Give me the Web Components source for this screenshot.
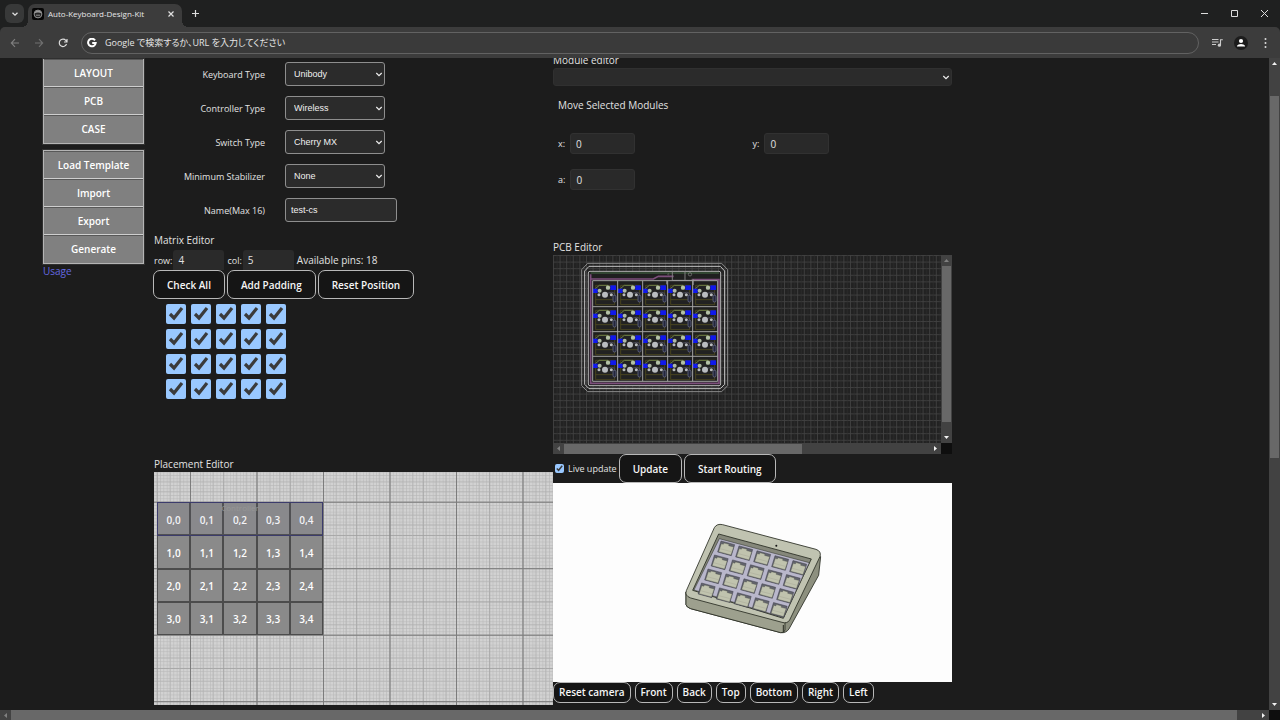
<!DOCTYPE html>
<html lang="ja">
<head>
<meta charset="utf-8">
<title>Auto-Keyboard-Design-Kit</title>
<style>
  html, body { margin: 0; height: 100%; background: #1c1c1c; overflow: hidden; }
  body { font: 10px/15px "Open Sans", "Noto Sans CJK JP", sans-serif; color: #e2e2e2; color-scheme: dark; }
</style>
</head>
<body>
<kit-window></kit-window>
<script>
const define = (name, html, setup) => {
  const template = document.createElement('template');
  template.innerHTML = `<style>
    *, :host { box-sizing: border-box; }
    :host { display: block; }
    button, input, select { font: inherit; color: inherit; margin: 0; }
    svg { display: block; }
  </style>` + html;
  customElements.define(name, class extends HTMLElement {
    constructor() {
      super();
      const root = this.attachShadow({ mode: 'open' });
      root.append(template.content.cloneNode(true));
      if (setup) setup.call(this, root);
    }
  });
};

/* ---------- Browser chrome ---------- */

define('tab-strip', `
<style>
  :host { display: flex; height: 27px; background: #1f2020; padding: 4px 1px 0 5px; }
  button { border: 0; background: none; padding: 0; display: grid; place-items: center; }
  .search { width: 19px; height: 19px; border-radius: 6px; background: #383939; margin-right: 4px; }
  .tab { position: relative; display: flex; align-items: center; width: 154px; height: 23px; background: #3c3c3c; border-radius: 7px 7px 0 0; padding: 0 7px 4px 4px; color: #e6e6e6; font-size: 8px; }
  .tab::before, .tab::after { content: ""; position: absolute; bottom: 0; width: 6px; height: 6px; }
  .tab::before { left: -6px; background: radial-gradient(circle at 0 0, transparent 6px, #3c3c3c 6px); }
  .tab::after { right: -6px; background: radial-gradient(circle at 100% 0, transparent 6px, #3c3c3c 6px); }
  .tab span { flex: 1; margin-left: 4px; white-space: nowrap; }
  .new { width: 26px; height: 19px; }
  .controls { margin-left: auto; display: flex; height: 19px; }
  .controls button { width: 30px; }
</style>
<button class="search" aria-label="Search tabs"><svg width="8" height="8" viewBox="0 0 8 8" fill="none" stroke="#e0e0e0" stroke-width="1.3"><path d="M1.5 2.8 4 5.2 6.5 2.8"/></svg></button>
<div class="tab">
  <svg width="12" height="12" viewBox="0 0 12 12"><rect width="12" height="12" rx="2" fill="#050505"/><circle cx="6" cy="6" r="3.9" fill="#242424" stroke="#b0b0b0" stroke-width=".8"/><path d="M2.4 5.4Q6 3.6 9.6 5.4L9 3.8Q6 1 3 3.8z" fill="#999"/><path d="M4 7.2h4" stroke="#aaa" stroke-width=".8" fill="none"/></svg>
  <span>Auto-Keyboard-Design-Kit</span>
  <button aria-label="Close tab"><svg width="8" height="8" viewBox="0 0 8 8" stroke="#e0e0e0" stroke-width="1.2"><path d="m1.5 1.5 5 5m0-5-5 5"/></svg></button>
</div>
<button class="new" aria-label="New tab"><svg width="9" height="9" viewBox="0 0 9 9" stroke="#ddd" stroke-width="1.2"><path d="M4.5 1v7M1 4.5h7"/></svg></button>
<div class="controls">
  <button aria-label="Minimize"><svg width="9" height="9" viewBox="0 0 9 9" stroke="#ddd"><path d="M1 4.5h7"/></svg></button>
  <button aria-label="Maximize"><svg width="9" height="9" viewBox="0 0 9 9" stroke="#ddd" fill="none"><path d="M1.5 1.5h6v6h-6z"/></svg></button>
  <button aria-label="Close"><svg width="9" height="9" viewBox="0 0 9 9" stroke="#ddd"><path d="m1 1 7 7m0-7-7 7"/></svg></button>
</div>`);

define('address-bar', `
<style>
  :host { display: flex; align-items: center; height: 31px; background: #3c3c3c; padding: 0 3px; border-radius: 5px 5px 0 0; }
  button { border: 0; background: none; padding: 0; width: 24px; height: 24px; display: grid; place-items: center; }
  label { flex: 1; display: flex; align-items: center; gap: 8px; height: 22px; margin: 0 6px; border: 1px solid #626262; border-radius: 11px; padding: 0 5px; background: #3a3a3a; }
  input { flex: 1; border: 0; outline: 0; padding: 0; background: none; font-size: 9px; font-feature-settings: "palt"; }
  input::placeholder { color: #e6e6e6; opacity: 1; }
</style>
<button aria-label="Back"><svg width="10" height="10" viewBox="0 0 10 10" fill="none" stroke="#808080" stroke-width="1.1"><path d="M9 5H1.5M5 1.2 1.3 5 5 8.8"/></svg></button>
<button aria-label="Forward"><svg width="10" height="10" viewBox="0 0 10 10" fill="none" stroke="#707070" stroke-width="1.1"><path d="M1 5h7.5M5 1.2 8.7 5 5 8.8"/></svg></button>
<button aria-label="Reload"><svg width="10" height="10" viewBox="0 0 10 10" fill="none" stroke="#ddd" stroke-width="1.2"><path d="M8.5 6A3.7 3.7 0 1 1 7.8 2.4L9 3.8M9 1v3H6"/></svg></button>
<label>
  <svg width="10" height="10" viewBox="0 0 10 10" fill="none" stroke="#fff" stroke-width="2"><path d="M8 2.3A3.8 3.8 0 1 0 8.7 5H5.2"/></svg>
  <input aria-label="Address" placeholder="Google で検索するか、URL を入力してください">
</label>
<button aria-label="Media"><svg width="11" height="10" viewBox="0 0 11 10"><path d="M0 1.5h6.5M0 4h6.5M0 6.5h4" stroke="#ccc" stroke-width="1.1"/><path d="M8.5 7V1.7h2.3" stroke="#ccc" stroke-width="1.1" fill="none"/><circle cx="7.4" cy="7.2" r="1.6" fill="#ccc"/></svg></button>
<button aria-label="Profile"><svg width="14" height="14" viewBox="0 0 14 14"><circle cx="7" cy="7" r="7" fill="#1c1c1c"/><circle cx="7" cy="5" r="2.1" fill="#fff"/><path d="M3 10.6V9.8Q4 7.9 7 7.9t4 1.9v.8z" fill="#fff"/></svg></button>
<button aria-label="Menu"><svg width="3" height="12" viewBox="0 0 3 12" fill="#ddd"><circle cx="1.5" cy="2" r="1"/><circle cx="1.5" cy="6" r="1"/><circle cx="1.5" cy="10" r="1"/></svg></button>`);

/* Scroll bar: the three numbers in "parts" share out the track before, under and after the thumb. */
define('scroll-track', `
<style>
  :host { display: flex; flex-direction: column; align-items: center; background: #424242; width: 11px; }
  :host([horizontal]) { flex-direction: row; width: auto; height: 11px; }
  svg { flex: none; width: 11px; height: 11px; fill: #f2f2f2; }
  .thumb { background: #686868; width: 9px; }
  :host([horizontal]) svg { transform: rotate(-90deg); }
  :host([horizontal]) .thumb { width: auto; height: 10px; }
  :host([at-start]) svg:first-of-type { fill: #808080; }
</style>
<svg viewBox="0 0 11 11"><path d="M5.5 4 8 7H3z"/></svg>
<div class="lead"></div><div class="thumb"></div><div class="trail"></div>
<svg viewBox="0 0 11 11"><path d="M5.5 7 3 4h5z"/></svg>`,
function (root) {
  const [a, b, c] = (this.getAttribute('parts') || '0 1 0').split(' ');
  [['.lead', a], ['.thumb', b], ['.trail', c]].forEach(([s, v]) => root.querySelector(s).style.flex = v + ' 1 0');
});

/* ---------- Shared controls ---------- */

define('kit-heading', `<style>:host { font-size: 10px; line-height: 15px; white-space: nowrap; }</style><slot></slot>`);

define('kit-button', `
<style>
  button { height: 29px; padding: 2px 13px 0; border: 1px solid #b8b8b8; border-radius: 7px; background: #151515; color: #f6f6f6; font-weight: 600; white-space: nowrap; display: block; }
  :host([small]) button { height: 21px; padding: 0 5px; }
</style>
<button type="button"><slot></slot></button>`);

define('nav-group', `
<style>
  :host { border: 1px solid #b4b4b4; box-shadow: 0 0 0 1px #303030; background: #808080; }
  :host([scrolled]) { border-top: 0; }
  button { display: block; width: 100%; height: 28px; padding: 1px 0 0; border: 0; border-bottom: 1px solid #cfcfcf; box-shadow: inset 0 1px #585858; background: #808080; color: #fff; font-weight: 600; font-size: 10px; }
  button:last-child { border-bottom: 0; }
</style>`,
function (root) {
  for (const name of this.getAttribute('items').split('|')) {
    const button = document.createElement('button');
    button.type = 'button';
    button.textContent = name;
    root.append(button);
  }
});

define('option-row', `
<style>
  :host { display: grid; grid-template-columns: 111px auto; column-gap: 20px; align-items: center; justify-content: start; height: 34px; }
  label { text-align: right; white-space: nowrap; font-size: 9px; }
  .box { position: relative; }
  select, input { display: block; height: 24px; border: 1px solid #8e8e8e; border-radius: 3px; background: #2b2b2b; color: #f0f0f0; font: 9px/12px "Liberation Sans", sans-serif; }
  select { appearance: none; width: 100px; padding: 0 20px 0 8px; }
  input { width: 112px; padding: 0 5px; }
  svg { position: absolute; right: 2px; top: 9px; pointer-events: none; }
</style>
<label for="field"></label><div class="box"></div>`,
function (root) {
  root.querySelector('label').textContent = this.getAttribute('label');
  const value = this.getAttribute('value');
  root.querySelector('.box').innerHTML = this.hasAttribute('text')
    ? `<input id="field" type="text" maxlength="16" value="${value}">`
    : `<select id="field"><option>${value}</option></select><svg width="8" height="7" viewBox="0 0 8 7" fill="none" stroke="#eee" stroke-width="1.2"><path d="M1.3 2 4 4.7 6.7 2"/></svg>`;
});

/* ---------- Left column ---------- */

define('matrix-editor', `
<style>
  .size { display: flex; height: 20px; margin-top: 2px; align-items: center; white-space: nowrap; }
  .size label { font-size: 9px; }
  .size input { width: 51px; height: 20px; padding: 0 5px; margin: 0 3px 0 1px; border: 0; border-radius: 3px 3px 0 0; background: #2a2a2a; }
  .actions { display: flex; gap: 2px; margin-left: -1px; }
  .keys { display: grid; grid-template-columns: repeat(5, 20px); gap: 5px; margin: 5px 0 0 12px; }
  .keys input { width: 20px; height: 20px; }
</style>
<kit-heading>Matrix Editor</kit-heading>
<div class="size">
  <label for="row">row:</label><input id="row" type="text" inputmode="numeric" value="4">
  <label for="col">col:</label><input id="col" type="text" inputmode="numeric" value="5">
  <output>Available pins: 18</output>
</div>
<div class="actions"><kit-button>Check All</kit-button><kit-button>Add Padding</kit-button><kit-button>Reset Position</kit-button></div>
<div class="keys"></div>`,
function (root) {
  let cells = '';
  for (let r = 0; r < 4; r++) for (let c = 0; c < 5; c++) cells += `<input type="checkbox" checked aria-label="Key ${r},${c}">`;
  root.querySelector('.keys').innerHTML = cells;
});

define('placement-editor', `
<style>
  .canvas { position: relative; height: 233px; background: #d2d2d2; overflow: hidden; }
  .canvas > svg { width: 100%; height: 100%; }
  .keys, .controller { position: absolute; left: 3px; top: 30px; width: 166px; }
  .keys { height: 133px; display: grid; grid-template: repeat(4, 1fr) / repeat(5, 1fr); }
  .keys div { display: grid; place-items: center; padding-top: 2px; background: #8a8a8a; border: 1px solid #4c4c4c; color: #fff; font-weight: 600; line-height: 12px; }
  .controller { height: 34px; border: 1px solid #3c3c6c; background: #8080a018; color: #969696; font-size: 8px; line-height: 10px; text-align: center; }
</style>
<kit-heading>Placement Editor</kit-heading>
<div class="canvas">
  <svg>
    <defs>
      <pattern id="fine" x="36" y="29.7" width="3.325" height="3.325" patternUnits="userSpaceOnUse"><path d="M0 .4H3.4M.4 0V3.4" stroke="#b9b9b9" stroke-width=".6"/></pattern>
      <pattern id="half" x="36" y="29.7" width="33.25" height="33.25" patternUnits="userSpaceOnUse"><path d="M0 .5H34M.5 0V34" stroke="#a0a0a0" stroke-width=".8"/><path d="M0 13H34M13 0V34M23 0V34M0 23H34" stroke="#b0b0b0" stroke-width=".6"/></pattern>
      <pattern id="major" x="36" y="29.7" width="66.5" height="66.5" patternUnits="userSpaceOnUse"><path d="M0 .5H67M.5 0V67" stroke="#7c7c7c" stroke-width="1"/></pattern>
    </defs>
    <rect width="100%" height="100%" fill="url(#fine)"/><rect width="100%" height="100%" fill="url(#half)"/><rect width="100%" height="100%" fill="url(#major)"/>
  </svg>
  <div class="keys"></div>
  <div class="controller">Controller</div>
</div>`,
function (root) {
  let cells = '';
  for (let r = 0; r < 4; r++) for (let c = 0; c < 5; c++) cells += `<div>${r},${c}</div>`;
  root.querySelector('.keys').innerHTML = cells;
});

/* ---------- Right column ---------- */

define('module-editor', `
<style>
  .pick { position: relative; }
  select { display: block; appearance: none; width: 100%; height: 18px; border: 1px solid #303030; border-radius: 3px; background: #2b2b2b; }
  .pick svg { position: absolute; right: 2px; top: 6px; pointer-events: none; }
  .move { padding: 12px 5px 0; }
  .axes { display: grid; grid-template-columns: 1fr 1fr; row-gap: 15px; padding-top: 20px; }
  .axes div { display: flex; align-items: center; gap: 5px; }
  .axes label { font-size: 9px; }
  .axes input { width: 65px; height: 21px; padding: 0 5px; border: 1px solid #313131; border-radius: 3px; background: #292929; }
</style>
<kit-heading>Module editor</kit-heading>
<div class="pick"><select aria-label="Module"><option></option></select>
<svg width="8" height="7" viewBox="0 0 8 7" fill="none" stroke="#eee" stroke-width="1.2"><path d="M1.3 2 4 4.7 6.7 2"/></svg></div>
<div class="move">
  <kit-heading>Move Selected Modules</kit-heading>
  <div class="axes">
    <div><label for="x">x:</label><input id="x" value="0"></div>
    <div><label for="y">y:</label><input id="y" value="0"></div>
    <div><label for="a">a:</label><input id="a" value="0"></div>
  </div>
</div>`);

define('pcb-editor', `
<style>
  .view { display: grid; grid-template: 1fr 11px / 1fr 11px; height: 199px; background: #0e0e0e; }
  .board { background: #222; overflow: hidden; min-width: 0; }
  .board svg { width: 100%; height: 100%; }
  .actions { display: flex; align-items: center; gap: 2px; height: 29px; padding-left: 2px; }
  .actions input { width: 9px; height: 9px; margin-right: 2px; }
  .actions label { white-space: nowrap; font-size: 9px; }
</style>
<kit-heading>PCB Editor</kit-heading>
<div class="view">
  <div class="board"><svg>
    <defs>
      <pattern id="g1" width="6.6" height="6.6" patternUnits="userSpaceOnUse"><path d="M0 .5H7M.5 0V7" stroke="#414141" stroke-width=".9"/><path d="M4 0V7" stroke="#2e2e2e" stroke-width=".7"/></pattern>
      <g id="unit">
        <path d="M9 12H66V70H9zM9 55H60" stroke="#5c5620" stroke-width="2" fill="#222"/>
        <path d="M8 22 20 12H46" stroke="#6d8046" stroke-width="3" fill="none"/>
        <path d="M66 46V36Q58 30 44 36" stroke="#4c4c5c" stroke-width="3" fill="none"/>
        <rect x="0" y="22" width="15" height="13" fill="#1018ee"/><rect x="53" y="12" width="17" height="14" fill="#1018ee"/>
        <g fill="#b9bcc0"><circle cx="37" cy="40" r="9"/><circle cx="21" cy="28" r="6" fill="#aebaa4"/><circle cx="46" cy="19" r="6.5" fill="#b4c2a6"/><circle cx="19" cy="40" r="4.5"/><circle cx="56" cy="40" r="4.5"/></g>
        <rect x="61" y="42" width="9" height="20" rx="4" fill="#23253a" stroke="#747a98" stroke-width="2"/>
      </g>
    </defs>
    <rect width="100%" height="100%" fill="url(#g1)"/>
    <g transform="translate(22 0) scale(.3333)" fill="none">
      <path d="M38 25H440L458 44V392L440 410H38L20 392V44z" stroke="#8c8c8c" stroke-width="3"/>
      <path d="M42 34H436L449 48V388L436 401H42L29 388V48z" stroke="#c4c4c4" stroke-width="3"/>
      <rect x="40" y="49" width="397" height="343" rx="5" stroke="#b4b4b4" stroke-width="3" fill="#1f1f1f"/>
      <path d="M47 54H432" stroke="#385338" stroke-width="4"/>
      <path d="M47 58V385H432V74H350M47 72H235L250 64H296" stroke="#7d4f7c" stroke-width="5"/>
      <path d="M292 50V76M330 50V76M292 76H356M275 76V88M355 72V90" stroke="#808080" stroke-width="3"/><circle cx="280" cy="58" r="2" stroke="#999"/><circle cx="345" cy="58" r="5" stroke="#888" stroke-width="2"/>
      <g id="units"></g>
      <path d="M53 77H428V379H53zM128 77V379M203 77V379M278 77V379M353 77V379M53 155H428M53 230H428M53 304H428" stroke="#a2a2a2" stroke-width="3"/>
    </g>
  </svg></div>
  <scroll-track parts="0 157 10" at-start></scroll-track>
  <scroll-track horizontal parts="0 237 128" at-start></scroll-track>
</div>
<div class="actions">
  <input id="live" type="checkbox" checked><label for="live">Live update</label>
  <kit-button>Update</kit-button><kit-button>Start Routing</kit-button>
</div>`,
function (root) {
  let units = '';
  for (let r = 0; r < 4; r++) for (let c = 0; c < 5; c++) units += `<use href="#unit" x="${53 + 75 * c}" y="${79 + 75 * r}"/>`;
  root.getElementById('units').innerHTML = units;
});

define('case-viewer', `
<style>
  .scene { height: 199px; background: #fdfdfd; }
  .scene svg { width: 100%; height: 100%; }
  .views { display: flex; gap: 4px; }
</style>
<div class="scene"><svg viewBox="0 0 399 199" role="img" aria-label="Case preview">
  <g transform="translate(117 27) scale(.3333)" stroke="#262a20" stroke-width="2.5" stroke-linejoin="round">
    <path d="M48 246V284Q50 292 62 296L332 368Q348 370 357 357L446 196 452 140z" fill="#8d907f"/>
    <path d="M48 246V284Q50 292 62 296L332 368Q343 370 345 360V330z" fill="#9da08e"/>
    <path d="M158 44 438 118Q455 124 450 140L359 330Q352 342 336 337L62 264Q43 257 49 242L133 53Q141 40 158 44z" fill="#c0c3b1"/>
    <path d="M340 345V366" stroke-width="3"/>
    <path d="M146 72 424 147 340 325 68 241z" fill="#85877a"/>
    <path d="M148 86 418 158 340 323 72 240z" fill="#b9b7cb" stroke-width="1.5"/>
    <circle cx="319" cy="107" r="3" fill="#111" stroke="none"/>
    <g id="sockets"></g>
  </g>
</svg></div>
<div class="views"></div>`,
function (root) {
  let sockets = '';
  for (let r = 0; r < 4; r++) for (let c = 0; c < 5; c++) {
    sockets += `<g transform="translate(${168 + 54 * c - 19.5 * r} ${115 + 14.7 * c + 42 * r})">
      <path d="M-15-22 26-11 16 22-25 11z" fill="#62646c" stroke="#3a3b46" stroke-width="1.5"/>
      <path d="M-14-14-8-12-6-16 9-12 8-8 23-4 15 20-22 10z" fill="#c0c3ae" stroke="#4a4c44" stroke-width="1"/>
      <path d="M-18 1 16 10" fill="none" stroke="#9a9c8c" stroke-width="1"/></g>`;
  }
  root.getElementById('sockets').innerHTML = sockets;
  root.querySelector('.views').innerHTML = ['Reset camera', 'Front', 'Back', 'Top', 'Bottom', 'Right', 'Left']
    .map(v => `<kit-button small>${v}</kit-button>`).join('');
});

/* ---------- Page ---------- */

define('kit-page', `
<style>
  :host { overflow: hidden; min-width: 0; min-height: 0; background: #1c1c1c; }
  main { display: grid; grid-template-columns: 111px 399fr 399fr 317fr; padding-left: 43px; margin-top: -8px; align-items: start; }
  nav { padding: 9px 10px 0 0; }
  nav nav-group + nav-group { margin-top: 6px; }
  a { color: #6468e0; text-decoration: none; display: block; }
  .left { padding-top: 7px; }
  .right { padding-top: 3px; }
  matrix-editor { margin-top: 6px; }
  placement-editor { margin-top: 58px; }
  pcb-editor { margin-top: 50px; }
</style>
<main>
  <nav>
    <nav-group scrolled items="LAYOUT|PCB|CASE"></nav-group>
    <nav-group items="Load Template|Import|Export|Generate"></nav-group>
    <a href="#usage">Usage</a>
  </nav>
  <div class="left">
    <option-row label="Keyboard Type" value="Unibody"></option-row>
    <option-row label="Controller Type" value="Wireless"></option-row>
    <option-row label="Switch Type" value="Cherry MX"></option-row>
    <option-row label="Minimum Stabilizer" value="None"></option-row>
    <option-row text label="Name(Max 16)" value="test-cs"></option-row>
    <matrix-editor></matrix-editor>
    <placement-editor></placement-editor>
  </div>
  <div class="right">
    <module-editor></module-editor>
    <pcb-editor></pcb-editor>
    <case-viewer></case-viewer>
  </div>
</main>`);

define('kit-window', `
<style>
  :host { display: flex; flex-direction: column; height: 100vh; background: #1f2020; }
  .body { flex: 1; min-height: 0; display: grid; grid-template: minmax(0, 1fr) 10px / minmax(0, 1fr) 11px; background: #0e0e0e; }
  .body > scroll-track[horizontal] { height: 10px; }
</style>
<tab-strip></tab-strip>
<address-bar></address-bar>
<div class="body">
  <kit-page></kit-page>
  <scroll-track parts="27 362 241"></scroll-track>
  <scroll-track horizontal parts="0 1226 21" at-start></scroll-track>
</div>`);
</script>
</body>
</html>
